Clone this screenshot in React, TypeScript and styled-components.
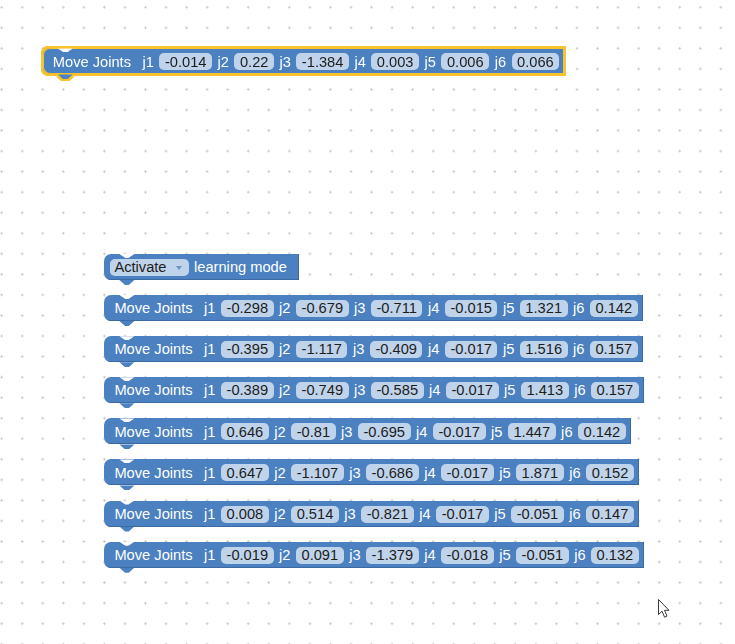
import React from "react";
import styled, { createGlobalStyle, css } from "styled-components";

const GlobalStyle = createGlobalStyle`
  html, body {
    margin: 0;
    padding: 0;
    background: #fff;
  }
  body {
    font-family: "Liberation Sans", Arial, sans-serif;
  }
`;

const BLUE = "#4c81c1";
const BLUE_DARK = "#3b6aa3";
const FIELD = "#bfd3ea";
const GRID = 20.55;

const Workspace = styled.div`
  position: relative;
  width: 735px;
  height: 644px;
  overflow: hidden;
  background-color: #fff;
  background-image: radial-gradient(circle, #c9c9c9 0.9px, rgba(255, 255, 255, 0) 1.4px);
  background-size: ${GRID}px ${GRID}px;
  background-position: -8.6px -3px;
`;

// blocks sit on the free canvas at their snapped coordinates
const Placed = styled.div<{ $x: number; $y: number }>`
  position: absolute;
  left: ${(p) => p.$x}px;
  top: ${(p) => p.$y}px;
`;

const Stack = styled.div`
  display: flex;
  flex-direction: column;
  align-items: flex-start;
  gap: 15.1px;
`;

const selectedOutline = css`
  filter: drop-shadow(2px 0 0 #f8c32c) drop-shadow(-2px 0 0 #f8c32c)
    drop-shadow(0 2px 0 #f8c32c) drop-shadow(0 -2px 0 #f8c32c);
`;

const Block = styled.div<{ $padLeft?: number; $padRight?: number; $selected?: boolean }>`
  position: relative;
  display: inline-flex;
  align-items: center;
  gap: 5.5px;
  height: 26px;
  box-sizing: border-box;
  padding: 1px ${(p) => p.$padRight ?? 5}px 0 ${(p) => p.$padLeft ?? 10}px;
  background: ${BLUE};
  border-radius: 7px 0 0 7px;
  box-shadow: ${(p) => (p.$selected ? "inset 0 0 0 1px #f8c32c" : `inset -1px -1px 0 ${BLUE_DARK}`)};
  white-space: nowrap;
  ${(p) => p.$selected && selectedOutline}

  &::before {
    content: "";
    position: absolute;
    left: 15px;
    top: 0;
    width: 15px;
    height: 4px;
    background: #fff;
    clip-path: polygon(0 0, 100% 0, 60% 100%, 40% 100%);
  }

  &::after {
    content: "";
    position: absolute;
    left: 15px;
    top: 100%;
    width: 15px;
    height: 5px;
    background: ${BLUE};
    clip-path: polygon(0 0, 100% 0, 62% 100%, 38% 100%);
  }
`;

const Label = styled.span<{ $wide?: boolean }>`
  color: #fff;
  font-size: 14.67px;
  line-height: 1;
  margin-right: ${(p) => (p.$wide ? 6 : 0)}px;
`;

const Field = styled.span`
  display: inline-flex;
  align-items: center;
  height: 17px;
  padding: 0 5.5px;
  border-radius: 5px;
  background: ${FIELD};
  color: #1d1d1d;
  font-size: 14.67px;
  line-height: 1;
`;

const Dropdown = styled(Field)`
  padding: 0 7px 0 4px;
  gap: 9px;
`;

const Caret = styled.span`
  width: 0;
  height: 0;
  border-left: 3.5px solid transparent;
  border-right: 3.5px solid transparent;
  border-top: 4px solid #6f93c4;
  margin-top: 1px;
`;

const Cursor = styled.svg`
  position: absolute;
  left: 657px;
  top: 598px;
`;

const rows: string[][] = [
  ["-0.298", "-0.679", "-0.711", "-0.015", "1.321", "0.142"],
  ["-0.395", "-1.117", "-0.409", "-0.017", "1.516", "0.157"],
  ["-0.389", "-0.749", "-0.585", "-0.017", "1.413", "0.157"],
  ["0.646", "-0.81", "-0.695", "-0.017", "1.447", "0.142"],
  ["0.647", "-1.107", "-0.686", "-0.017", "1.871", "0.152"],
  ["0.008", "0.514", "-0.821", "-0.017", "-0.051", "0.147"],
  ["-0.019", "0.091", "-1.379", "-0.018", "-0.051", "0.132"],
];

const MoveJoints = ({ values, selected }: { values: string[]; selected?: boolean }) => (
  <Block $selected={selected}>
    <Label $wide>Move Joints</Label>
    {values.map((v, i) => (
      <React.Fragment key={i}>
        <Label>j{i + 1}</Label>
        <Field>{v}</Field>
      </React.Fragment>
    ))}
  </Block>
);

export default function App() {
  return (
    <>
      <GlobalStyle />
      <Workspace>
        <Placed $x={42.8} $y={48.4}>
          <MoveJoints selected values={["-0.014", "0.22", "-1.384", "0.003", "0.006", "0.066"]} />
        </Placed>

        <Placed $x={104.4} $y={254}>
          <Stack>
            <Block $padLeft={6} $padRight={12}>
              <Dropdown>
                Activate
                <Caret />
              </Dropdown>
              <Label>learning mode</Label>
            </Block>
            {rows.map((r, i) => (
              <MoveJoints key={i} values={r} />
            ))}
          </Stack>
        </Placed>

        <Cursor width="14" height="22" viewBox="0 0 14 22">
          <path
            d="M1.5 1.5 L1.5 16.5 L5 13.2 L7.6 19.2 L10 18.1 L7.5 12.3 L12 12.3 Z"
            fill="#fff"
            stroke="#3a3a3a"
            strokeWidth="1"
            strokeLinejoin="round"
          />
        </Cursor>
      </Workspace>
    </>
  );
}
